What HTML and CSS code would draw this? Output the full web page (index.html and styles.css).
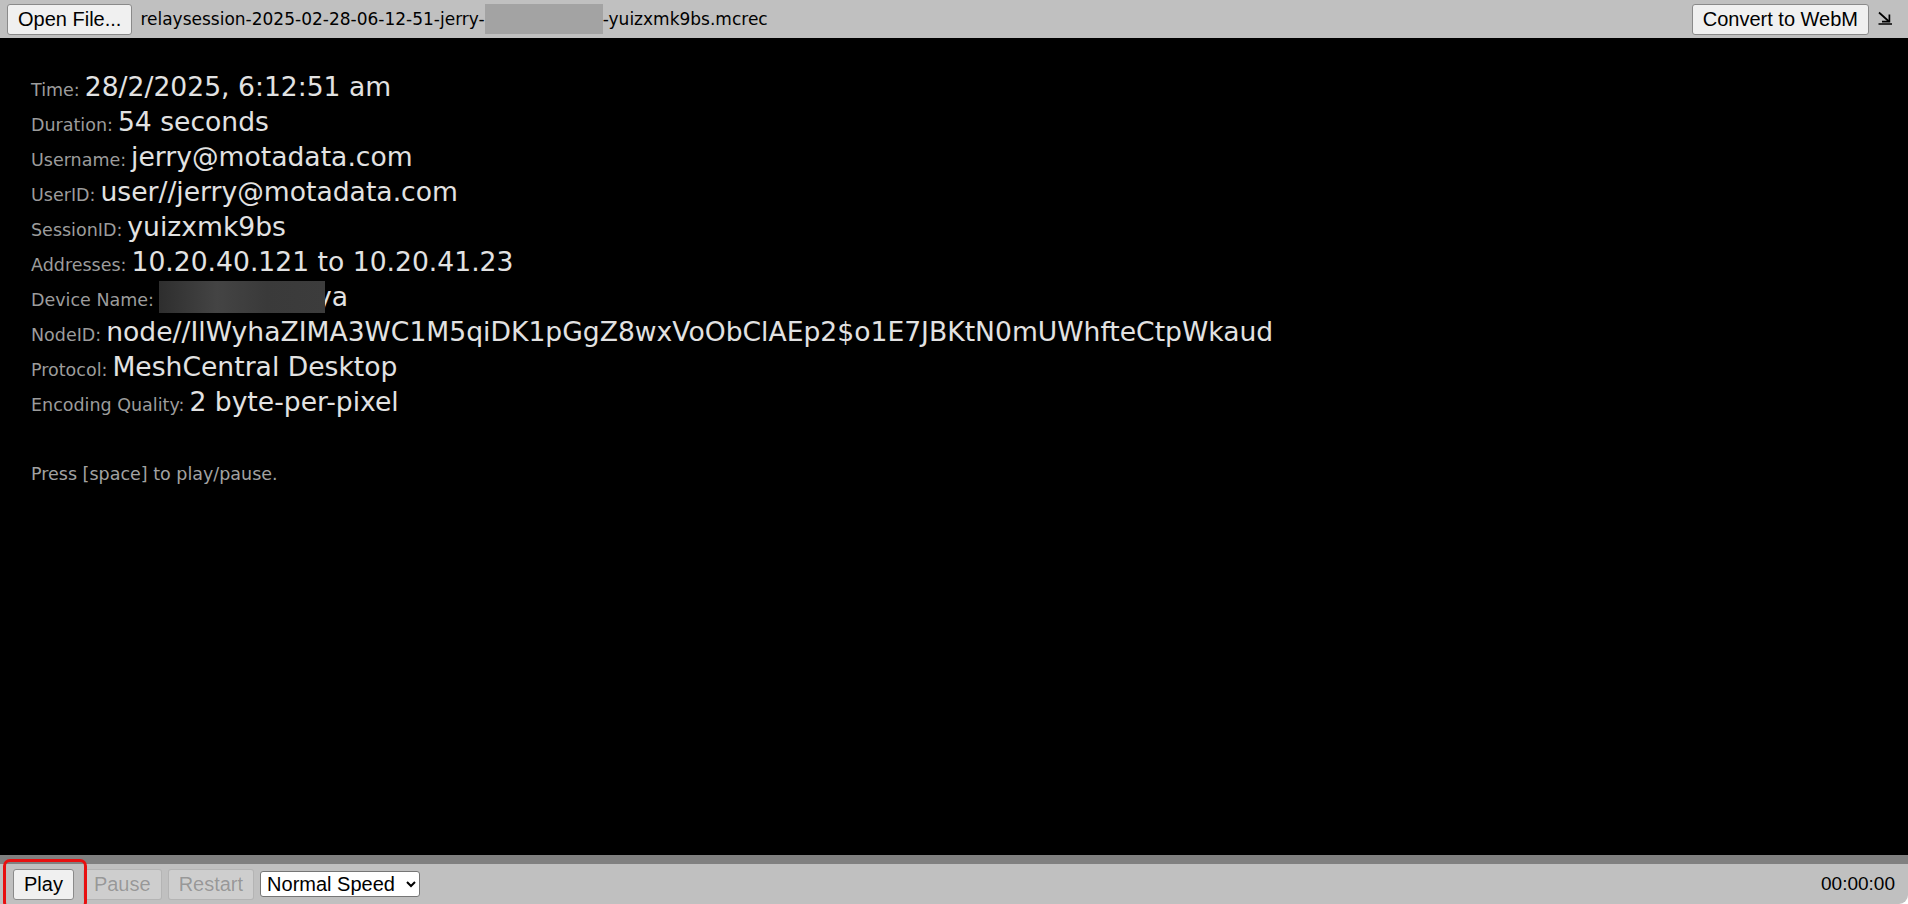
FILE: index.html
```html
<!DOCTYPE html>
<html>
<head>
<meta charset="utf-8">
<link rel="stylesheet" href="styles.css">
</head>
<body>
<div class="page">
  <div class="topbar">
    <button class="btn">Open File...</button>
    <div class="filename">relaysession-2025-02-28-06-12-51-jerry-<span class="blur-top"></span>-yuizxmk9bs.mcrec</div>
    <div class="spacer"></div>
    <button class="btn">Convert to WebM</button>
    <span class="arrow">
      <svg width="16" height="14" viewBox="0 0 16 14"><path d="M2 1.5 L12 10.5" stroke="#000" stroke-width="1.7" fill="none"/><path d="M5 10.6 H12.4 V3.5" stroke="#000" stroke-width="1.7" fill="none"/><path d="M1.5 13 H15" stroke="#000" stroke-width="1.5"/></svg>
    </span>
  </div>
  <div class="main">
    <div class="info">
      <div class="row"><span class="lbl">Time:</span><span class="val">28/2/2025, 6:12:51 am</span></div>
      <div class="row"><span class="lbl">Duration:</span><span class="val">54 seconds</span></div>
      <div class="row"><span class="lbl">Username:</span><span class="val">jerry@motadata.com</span></div>
      <div class="row"><span class="lbl">UserID:</span><span class="val">user//jerry@motadata.com</span></div>
      <div class="row"><span class="lbl">SessionID:</span><span class="val">yuizxmk9bs</span></div>
      <div class="row"><span class="lbl">Addresses:</span><span class="val">10.20.40.121 to 10.20.41.23</span></div>
      <div class="row"><span class="lbl">Device Name:</span><span class="val"><span class="blur-dev"></span><span class="dev-tail">ya</span></span></div>
      <div class="row"><span class="lbl">NodeID:</span><span class="val">node//IlWyhaZIMA3WC1M5qiDK1pGgZ8wxVoObClAEp2$o1E7JBKtN0mUWhfteCtpWkaud</span></div>
      <div class="row"><span class="lbl">Protocol:</span><span class="val">MeshCentral Desktop</span></div>
      <div class="row"><span class="lbl">Encoding Quality:</span><span class="val">2 byte-per-pixel</span></div>
    </div>
    <div class="hint">Press [space] to play/pause.</div>
  </div>
  <div class="progress"></div>
  <div class="bottombar">
    <div class="play-wrap"><button class="btn">Play</button></div>
    <button class="btn" disabled>Pause</button>
    <button class="btn" disabled>Restart</button>
    <select class="speed"><option>Normal Speed</option></select>
    <div class="spacer"></div>
    <div class="clock">00:00:00</div>
  </div>
</div>
</body>
</html>
```
FILE: styles.css
```css
html, body {
  margin: 0;
  padding: 0;
  background: #fff;
}
.page {
  width: 1908px;
  height: 904px;
  display: flex;
  flex-direction: column;
  overflow: hidden;
  border-bottom-right-radius: 9px;
}
.topbar {
  height: 38px;
  background: #c0c0c0;
  display: flex;
  align-items: center;
  padding: 0 15px 0 7px;
  box-sizing: border-box;
  flex: none;
}
.btn {
  font-family: "Liberation Sans", Arial, sans-serif;
  font-size: 20px;
  color: #000;
  background: #f0f0f0;
  border: 1px solid #8a8a8a;
  border-radius: 3px;
  height: 31px;
  padding: 0 10px;
  margin: 0;
}
.btn:disabled {
  color: rgba(16,16,16,0.3);
  background: rgba(239,239,239,0.3);
  border-color: rgba(118,118,118,0.3);
}
.filename {
  font-family: "DejaVu Sans", sans-serif;
  font-size: 17px;
  color: #000;
  margin-left: 8px;
  display: flex;
  align-items: center;
  white-space: nowrap;
}
.blur-top {
  display: inline-block;
  width: 118px;
  height: 30px;
  background: #a3a3a3;
}
.spacer { flex: 1; }
.arrow {
  margin-left: 8px;
  display: flex;
  align-items: center;
  padding-bottom: 2px;
}
.main {
  flex: 1;
  background: #000;
  padding: 31px 0 0 31px;
  font-family: "DejaVu Sans", sans-serif;
}
.row {
  font-size: 26.6px;
  line-height: 35px;
  height: 35px;
  white-space: nowrap;
}
.lbl {
  font-size: 17.5px;
  line-height: 1;
  color: #9c9c9c;
}
.val {
  font-size: 26.6px;
  line-height: 1;
  color: #e2e2e2;
  margin-left: 5px;
}
.blur-dev {
  display: inline-block;
  position: relative;
  z-index: 1;
  width: 166px;
  height: 32px;
  background: linear-gradient(90deg, #2e2e2e, #444 35%, #3a3a3a 65%, #3c3c3c);
  vertical-align: -7px;
}
.dev-tail {
  margin-left: -9px;
}
.hint {
  margin-top: 45px;
  font-size: 17.5px;
  color: #a2a2a2;
}
.progress {
  height: 9px;
  background: #808080;
  flex: none;
}
.bottombar {
  height: 40px;
  background: #c0c0c0;
  display: flex;
  align-items: center;
  gap: 6px;
  padding: 0 13px 0 13px;
  box-sizing: border-box;
  flex: none;
}
.play-wrap {
  position: relative;
  display: flex;
  margin-right: 3px;
}
.play-wrap::after {
  content: "";
  position: absolute;
  left: -10px;
  top: -10px;
  right: -13px;
  bottom: -9px;
  border: 3px solid #e81010;
  border-radius: 7px;
}
.speed {
  font-family: "Liberation Sans", Arial, sans-serif;
  font-size: 20px;
  width: 160px;
  height: 26px;
  background: #fff;
  border: 1px solid #767676;
  border-radius: 3px;
  color: #000;
  padding: 0 0 0 2px;
}
.clock {
  font-family: "Liberation Sans", Arial, sans-serif;
  font-size: 19px;
  color: #000;
}
```
